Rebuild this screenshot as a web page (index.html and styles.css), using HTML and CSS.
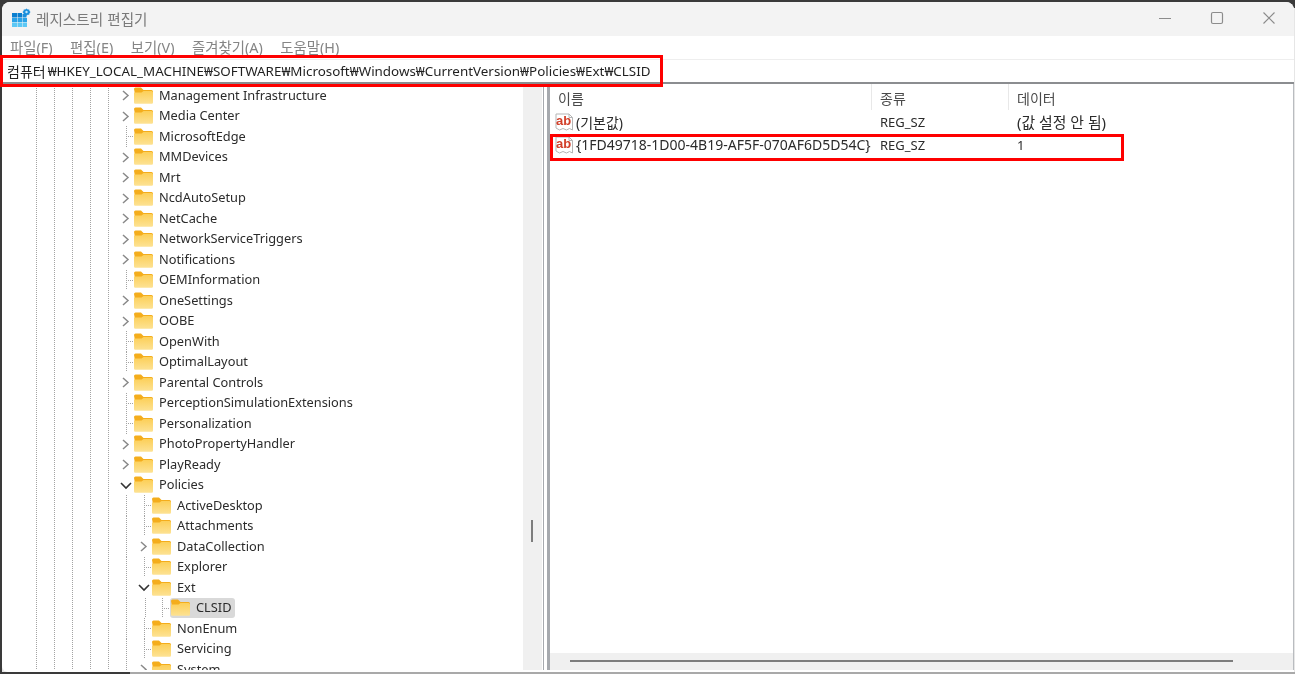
FILE: index.html
```html
<!DOCTYPE html>
<html lang="ko">
<head>
<meta charset="utf-8">
<title>레지스트리 편집기</title>
<link rel="stylesheet" href="styles.css">
</head>
<body>
<svg class="defs" width="0" height="0" aria-hidden="true">
  <defs>
    <linearGradient id="fb" x1="0" y1="0" x2="0" y2="1"><stop offset="0" stop-color="#fccf58"/><stop offset="1" stop-color="#fde293"/></linearGradient>
    <symbol id="folder" viewBox="0 0 19 17">
      <path d="M0 2a1.500 1.500 0 0 1 1.500-1.500h5.500l2.500 2.500h8a1.500 1.500 0 0 1 1.500 1.500v3h-18z" fill="#f4ad1c"/>
      <path d="M0 5.500h7.500l2-1.500h8a1.500 1.500 0 0 1 1.500 1.500v10a1.200 1.200 0 0 1-1.200 1.200h-16.600a1.200 1.200 0 0 1-1.200-1.200z" fill="url(#fb)"/>
    </symbol>
    <symbol id="chev-r" viewBox="0 0 16 20"><path d="M5 6l5 4.500-5 4.500" fill="none" stroke="#8a8a8a" stroke-width="1.500"/></symbol>
    <symbol id="chev-d" viewBox="0 0 16 20"><path d="M3 8l5 5 5-5" fill="none" stroke="#333" stroke-width="1.600"/></symbol>
    <symbol id="sz" viewBox="0 0 19 20">
      <path d="M1 2h13l3.500 3.500v12.500l-3-1.500-3 1.500-3.500-1.500-3.500 1.500-3.500-2z" fill="#fff" stroke="#b5b5b5" stroke-width="1"/>
      <path d="M14 2v3.500h3.500" fill="none" stroke="#b5b5b5" stroke-width="1"/>
      <text class="ab" x="1" y="13">ab</text>
    </symbol>
  </defs>
</svg>

<div class="window">
  <header class="titlebar">
    <svg class="appicon" viewBox="0 0 20 20" width="20" height="20" aria-hidden="true">
      <rect x="1" y="5" width="5" height="4.500" fill="#0a7fd0"/><rect x="6.500" y="5" width="4.500" height="4.500" fill="#0a7fd0"/><rect x="11.500" y="6" width="4" height="3.500" fill="#1b8fdc"/>
      <rect x="1" y="10" width="5" height="4" fill="#2aa3e8"/><rect x="6.500" y="10" width="4.500" height="4" fill="#2aa3e8"/><rect x="11.500" y="10" width="4.500" height="4" fill="#2aa3e8"/>
      <rect x="1" y="14.500" width="5" height="4.500" fill="#5cc8f5"/><rect x="6.500" y="14.500" width="4.500" height="4.500" fill="#5cc8f5"/><rect x="11.500" y="14.500" width="4.500" height="4.500" fill="#5cc8f5"/>
      <path d="M15.500 .5l1.200 1h1.500l.3 1.500 1 1.100-1 1.200-.3 1.500h-1.500l-1.200 1-1.200-1h-1.500l-.3-1.500-1-1.200 1-1.100.3-1.500h1.500z" fill="#1b8fdc"/>
      <circle cx="15.500" cy="4" r="1.200" fill="#bfe6fb"/>
    </svg>
    <span class="title">레지스트리 편집기</span>
    <div class="caption">
      <svg viewBox="0 0 14 14" width="14" height="14" aria-hidden="true"><path d="M1 7.500h12" stroke="#8c8c8c" stroke-width="1.200"/></svg>
      <svg viewBox="0 0 14 14" width="14" height="14" aria-hidden="true"><rect x="1.500" y="1.500" width="11" height="11" rx="1.500" fill="none" stroke="#8c8c8c" stroke-width="1.200"/></svg>
      <svg viewBox="0 0 14 14" width="14" height="14" aria-hidden="true"><path d="M1.500 1.500l11 11M12.500 1.500l-11 11" stroke="#8c8c8c" stroke-width="1.100"/></svg>
    </div>
  </header>

  <nav class="menubar">
    <span>파일(F)</span><span>편집(E)</span><span>보기(V)</span><span>즐겨찾기(A)</span><span>도움말(H)</span>
  </nav>

  <div class="addressbar"><span class="ko">컴퓨터</span>₩HKEY_LOCAL_MACHINE₩SOFTWARE₩Microsoft₩Windows₩CurrentVersion₩Policies₩Ext₩CLSID</div>

  <main class="content">
    <section class="treepane">
      <div class="tree">
        <div class="row"><svg class="slot"><use href="#chev-r"/></svg><svg class="folder"><use href="#folder"/></svg><span class="label">Management Infrastructure</span></div>
        <div class="row"><svg class="slot"><use href="#chev-r"/></svg><svg class="folder"><use href="#folder"/></svg><span class="label">Media Center</span></div>
        <div class="row"><span class="tee"></span><svg class="folder"><use href="#folder"/></svg><span class="label">MicrosoftEdge</span></div>
        <div class="row"><svg class="slot"><use href="#chev-r"/></svg><svg class="folder"><use href="#folder"/></svg><span class="label">MMDevices</span></div>
        <div class="row"><svg class="slot"><use href="#chev-r"/></svg><svg class="folder"><use href="#folder"/></svg><span class="label">Mrt</span></div>
        <div class="row"><svg class="slot"><use href="#chev-r"/></svg><svg class="folder"><use href="#folder"/></svg><span class="label">NcdAutoSetup</span></div>
        <div class="row"><svg class="slot"><use href="#chev-r"/></svg><svg class="folder"><use href="#folder"/></svg><span class="label">NetCache</span></div>
        <div class="row"><svg class="slot"><use href="#chev-r"/></svg><svg class="folder"><use href="#folder"/></svg><span class="label">NetworkServiceTriggers</span></div>
        <div class="row"><svg class="slot"><use href="#chev-r"/></svg><svg class="folder"><use href="#folder"/></svg><span class="label">Notifications</span></div>
        <div class="row"><span class="tee"></span><svg class="folder"><use href="#folder"/></svg><span class="label">OEMInformation</span></div>
        <div class="row"><svg class="slot"><use href="#chev-r"/></svg><svg class="folder"><use href="#folder"/></svg><span class="label">OneSettings</span></div>
        <div class="row"><svg class="slot"><use href="#chev-r"/></svg><svg class="folder"><use href="#folder"/></svg><span class="label">OOBE</span></div>
        <div class="row"><span class="tee"></span><svg class="folder"><use href="#folder"/></svg><span class="label">OpenWith</span></div>
        <div class="row"><span class="tee"></span><svg class="folder"><use href="#folder"/></svg><span class="label">OptimalLayout</span></div>
        <div class="row"><svg class="slot"><use href="#chev-r"/></svg><svg class="folder"><use href="#folder"/></svg><span class="label">Parental Controls</span></div>
        <div class="row"><span class="tee"></span><svg class="folder"><use href="#folder"/></svg><span class="label">PerceptionSimulationExtensions</span></div>
        <div class="row"><span class="tee"></span><svg class="folder"><use href="#folder"/></svg><span class="label">Personalization</span></div>
        <div class="row"><svg class="slot"><use href="#chev-r"/></svg><svg class="folder"><use href="#folder"/></svg><span class="label">PhotoPropertyHandler</span></div>
        <div class="row"><svg class="slot"><use href="#chev-r"/></svg><svg class="folder"><use href="#folder"/></svg><span class="label">PlayReady</span></div>
        <div class="row"><svg class="slot"><use href="#chev-d"/></svg><svg class="folder"><use href="#folder"/></svg><span class="label">Policies</span></div>
        <div class="row l1"><span class="tee"></span><svg class="folder"><use href="#folder"/></svg><span class="label">ActiveDesktop</span></div>
        <div class="row l1"><span class="tee"></span><svg class="folder"><use href="#folder"/></svg><span class="label">Attachments</span></div>
        <div class="row l1"><svg class="slot"><use href="#chev-r"/></svg><svg class="folder"><use href="#folder"/></svg><span class="label">DataCollection</span></div>
        <div class="row l1"><span class="tee"></span><svg class="folder"><use href="#folder"/></svg><span class="label">Explorer</span></div>
        <div class="row l1"><svg class="slot"><use href="#chev-d"/></svg><svg class="folder"><use href="#folder"/></svg><span class="label">Ext</span></div>
        <div class="row l2"><span class="tee"></span><span class="selected"><svg class="folder"><use href="#folder"/></svg><span class="label">CLSID</span></span></div>
        <div class="row l1"><span class="tee"></span><svg class="folder"><use href="#folder"/></svg><span class="label">NonEnum</span></div>
        <div class="row l1"><span class="tee"></span><svg class="folder"><use href="#folder"/></svg><span class="label">Servicing</span></div>
        <div class="row l1"><svg class="slot"><use href="#chev-r"/></svg><svg class="folder"><use href="#folder"/></svg><span class="label">System</span></div>
      </div>
      <div class="vscroll"><i class="vthumb"></i></div>
    </section>

    <div class="splitter"></div>

    <section class="listpane">
      <div class="list">
        <div class="listhead"><span>이름</span><span>종류</span><span>데이터</span></div>
        <div class="listrow"><span class="namecell"><svg class="szicon"><use href="#sz"/></svg>(기본값)</span><span>REG_SZ</span><span class="koval">(값 설정 안 됨)</span></div>
        <div class="listrow"><span class="namecell"><svg class="szicon"><use href="#sz"/></svg>{1FD49718-1D00-4B19-AF5F-070AF6D5D54C}</span><span>REG_SZ</span><span>1</span></div>
      </div>
      <div class="hscroll"><i class="hthumb"></i></div>
    </section>
  </main>
</div>

<div class="redbox box-address"></div>
<div class="redbox box-value"></div>
</body>
</html>
```

FILE: styles.css
```css
* { box-sizing: border-box; }

html, body {
  margin: 0;
  height: 100%;
  overflow: hidden;
}

body {
  position: relative;
  padding: 2px 1px 2px 2px;
  background-color: #e6e6e6;
  background-image:
    linear-gradient(#3a3a3a, #3a3a3a),
    linear-gradient(#3a3a3a, #3a3a3a),
    linear-gradient(90deg, #3a3a3a 130px, #a9a9a9 130px);
  background-size: 100% 8px, 2px 100%, 100% 2px;
  background-position: 0 0, 0 0, 0 100%;
  background-repeat: no-repeat;
  font-family: "Noto Sans", "Noto Sans CJK KR", sans-serif;
  color: #2b2b2b;
}

.defs { position: absolute; }

.window {
  height: 100%;
  display: flex;
  flex-direction: column;
  background: #fff;
  border-radius: 8px 8px 0 6px;
  overflow: hidden;
  filter: blur(0.35px);
}

.titlebar {
  flex: 0 0 34px;
  display: flex;
  align-items: center;
  background: #f3f3f3;
  padding: 0 0 2px 9px;
}

.appicon { margin-right: 5px; }

.title {
  font-family: "Noto Sans CJK KR", sans-serif;
  font-size: 14.600px;
  color: #7a7a7a;
}

.caption {
  margin-left: auto;
  display: flex;
  gap: 38px;
  padding-right: 18px;
}

.menubar {
  flex: 0 0 23px;
  display: flex;
  align-items: center;
  gap: 17.500px;
  padding: 0 0 2px 8px;
  font-size: 14.400px;
  color: #858585;
}

.addressbar {
  flex: 0 0 25px;
  display: flex;
  align-items: center;
  padding-left: 5px;
  border-top: 1px solid #eeeeee;
  border-bottom: 2px solid #8b8d90;
  font-size: 13.400px;
  color: #1f1f1f;
  white-space: nowrap;
}

.ko {
  font-size: 14px;
  margin-right: 2px;
}

.content {
  flex: 1;
  min-height: 0;
  display: flex;
  padding-bottom: 2px;
}

.treepane {
  flex: 0 0 540px;
  display: flex;
  min-height: 0;
}

.tree {
  flex: 1;
  min-width: 0;
  overflow: hidden;
  padding-top: 1px;
  background-image:
    linear-gradient(#a3a3a3 50%, transparent 50%),
    linear-gradient(#a3a3a3 50%, transparent 50%),
    linear-gradient(#a3a3a3 50%, transparent 50%),
    linear-gradient(#a3a3a3 50%, transparent 50%),
    linear-gradient(#a3a3a3 50%, transparent 50%);
  background-size: 1px 2px;
  background-repeat: repeat-y;
  background-position: 34px 0, 52px 0, 70px 0, 88px 0, 106px 0;
}

.row {
  height: 20.500px;
  display: flex;
  align-items: center;
  padding-left: 116px;
  font-size: 12.800px;
  white-space: nowrap;
}

.l1, .l2 {
  background-image: linear-gradient(#a3a3a3 50%, transparent 50%);
  background-size: 1px 2px;
  background-repeat: repeat-y;
  background-position: 124px 0;
}

.l1 { padding-left: 134px; }

.l2 {
  padding-left: 152px;
  background-image:
    linear-gradient(#a3a3a3 50%, transparent 50%),
    linear-gradient(#a3a3a3 50%, transparent 50%);
  background-position: 124px 0, 143px 0;
}

.slot {
  flex: 0 0 16px;
  width: 16px;
  height: 20px;
}

.tee {
  flex: 0 0 8px;
  align-self: stretch;
  margin-left: 8px;
  background-image:
    linear-gradient(#a3a3a3 50%, transparent 50%),
    linear-gradient(90deg, #a3a3a3 50%, transparent 50%);
  background-size: 1px 2px, 2px 1px;
  background-repeat: repeat-y, repeat-x;
  background-position: 0 0, 0 10px;
}

.folder {
  flex: 0 0 19px;
  width: 19px;
  height: 17px;
}

.label {
  margin-left: 6px;
  margin-top: -1px;
  color: #2b2b2b;
}

.selected {
  display: flex;
  align-items: center;
  height: 20.500px;
  padding-left: 1px;
  padding-right: 3px;
  background: #d9d9d9;
  border-radius: 3px;
}

.vscroll {
  flex: 0 0 19px;
  background: #f0f0f0;
  position: relative;
}

.vthumb {
  position: absolute;
  left: 8px;
  top: 436px;
  width: 2px;
  height: 22px;
  background: #7d7d7d;
}

.splitter {
  flex: 0 0 8px;
  background: linear-gradient(90deg, #fff 0 1px, #a6a9ae 1px 2px, #fff 2px 5px, #a6a9ae 5px 8px);
}

.listpane {
  flex: 1;
  min-width: 0;
  display: flex;
  flex-direction: column;
  border-right: 1px solid #b9bcc0;
}

.list {
  flex: 1;
  min-height: 0;
  font-size: 13px;
}

.listhead, .listrow {
  display: grid;
  grid-template-columns: 322px 137px 1fr;
  align-items: center;
}

.listhead {
  height: 26px;
  color: #4a4a4a;
  font-family: "Noto Sans CJK KR", sans-serif;
  font-size: 14px;
}

.listhead span {
  padding-left: 8px;
  height: 26px;
  line-height: 28px;
  border-right: 1px solid #e8e8e8;
}

.listhead span:last-child { border-right: 0; }

.listrow {
  height: 23px;
  white-space: nowrap;
}

.listrow span { padding-left: 8px; }

.listrow .namecell {
  display: flex;
  align-items: center;
  padding-left: 5px;
  font-size: 14px;
}

.listrow .koval { font-size: 14.900px; }

.szicon {
  flex: 0 0 19px;
  width: 19px;
  height: 20px;
  margin-right: 2px;
}

.ab {
  font-family: "Liberation Sans", sans-serif;
  font-size: 13px;
  font-weight: 700;
  fill: #d2402a;
}

.hscroll {
  flex: 0 0 17px;
  background: #f0f0f0;
  position: relative;
}

.hthumb {
  position: absolute;
  left: 20px;
  right: 60px;
  top: 7px;
  height: 2px;
  background: #7d7d7d;
}

.redbox {
  position: absolute;
  border: 3px solid #fe0000;
  pointer-events: none;
}

.box-address {
  left: 0;
  top: 55px;
  width: 663px;
  height: 32px;
}

.box-value {
  left: 550px;
  top: 134px;
  width: 574px;
  height: 27px;
}
```
